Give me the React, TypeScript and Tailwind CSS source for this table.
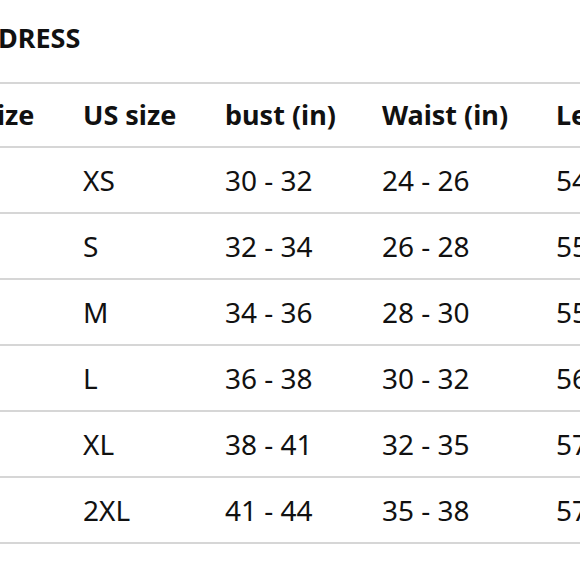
const headers = ["Size", "US size", "bust (in)", "Waist (in)", "Length (in)"];

const rows = [
  ["", "XS", "30 - 32", "24 - 26", "54"],
  ["", "S", "32 - 34", "26 - 28", "55"],
  ["", "M", "34 - 36", "28 - 30", "55"],
  ["", "L", "36 - 38", "30 - 32", "56"],
  ["", "XL", "38 - 41", "32 - 35", "57"],
  ["", "2XL", "41 - 44", "35 - 38", "57"],
];

const cols = "grid grid-cols-[101px_142px_157px_174px_160px]";

export default function App() {
  return (
    <div
      className="w-[580px] h-[580px] overflow-hidden bg-white text-[#111]"
      style={{ fontFamily: '"Noto Sans", "Open Sans", sans-serif' }}
    >
      <h1 className="pt-[24px] -ml-[2px] text-[27px] leading-none font-bold">DRESS</h1>

      <div className="mt-[31px] -ml-[18px] w-[740px]">
        <div className={`${cols} h-[66px] items-center border-y-2 border-[#d6d6d6] text-[27px] font-bold`}>
          {headers.map((h) => (
            <div key={h} className="whitespace-nowrap">{h}</div>
          ))}
        </div>
        {rows.map((r) => (
          <div
            key={r[1]}
            className={`${cols} h-[66px] items-center border-b-2 border-[#d6d6d6] text-[28px]`}
          >
            {r.map((c, i) => (
              <div key={i} className="whitespace-nowrap">{c}</div>
            ))}
          </div>
        ))}
      </div>
    </div>
  );
}
